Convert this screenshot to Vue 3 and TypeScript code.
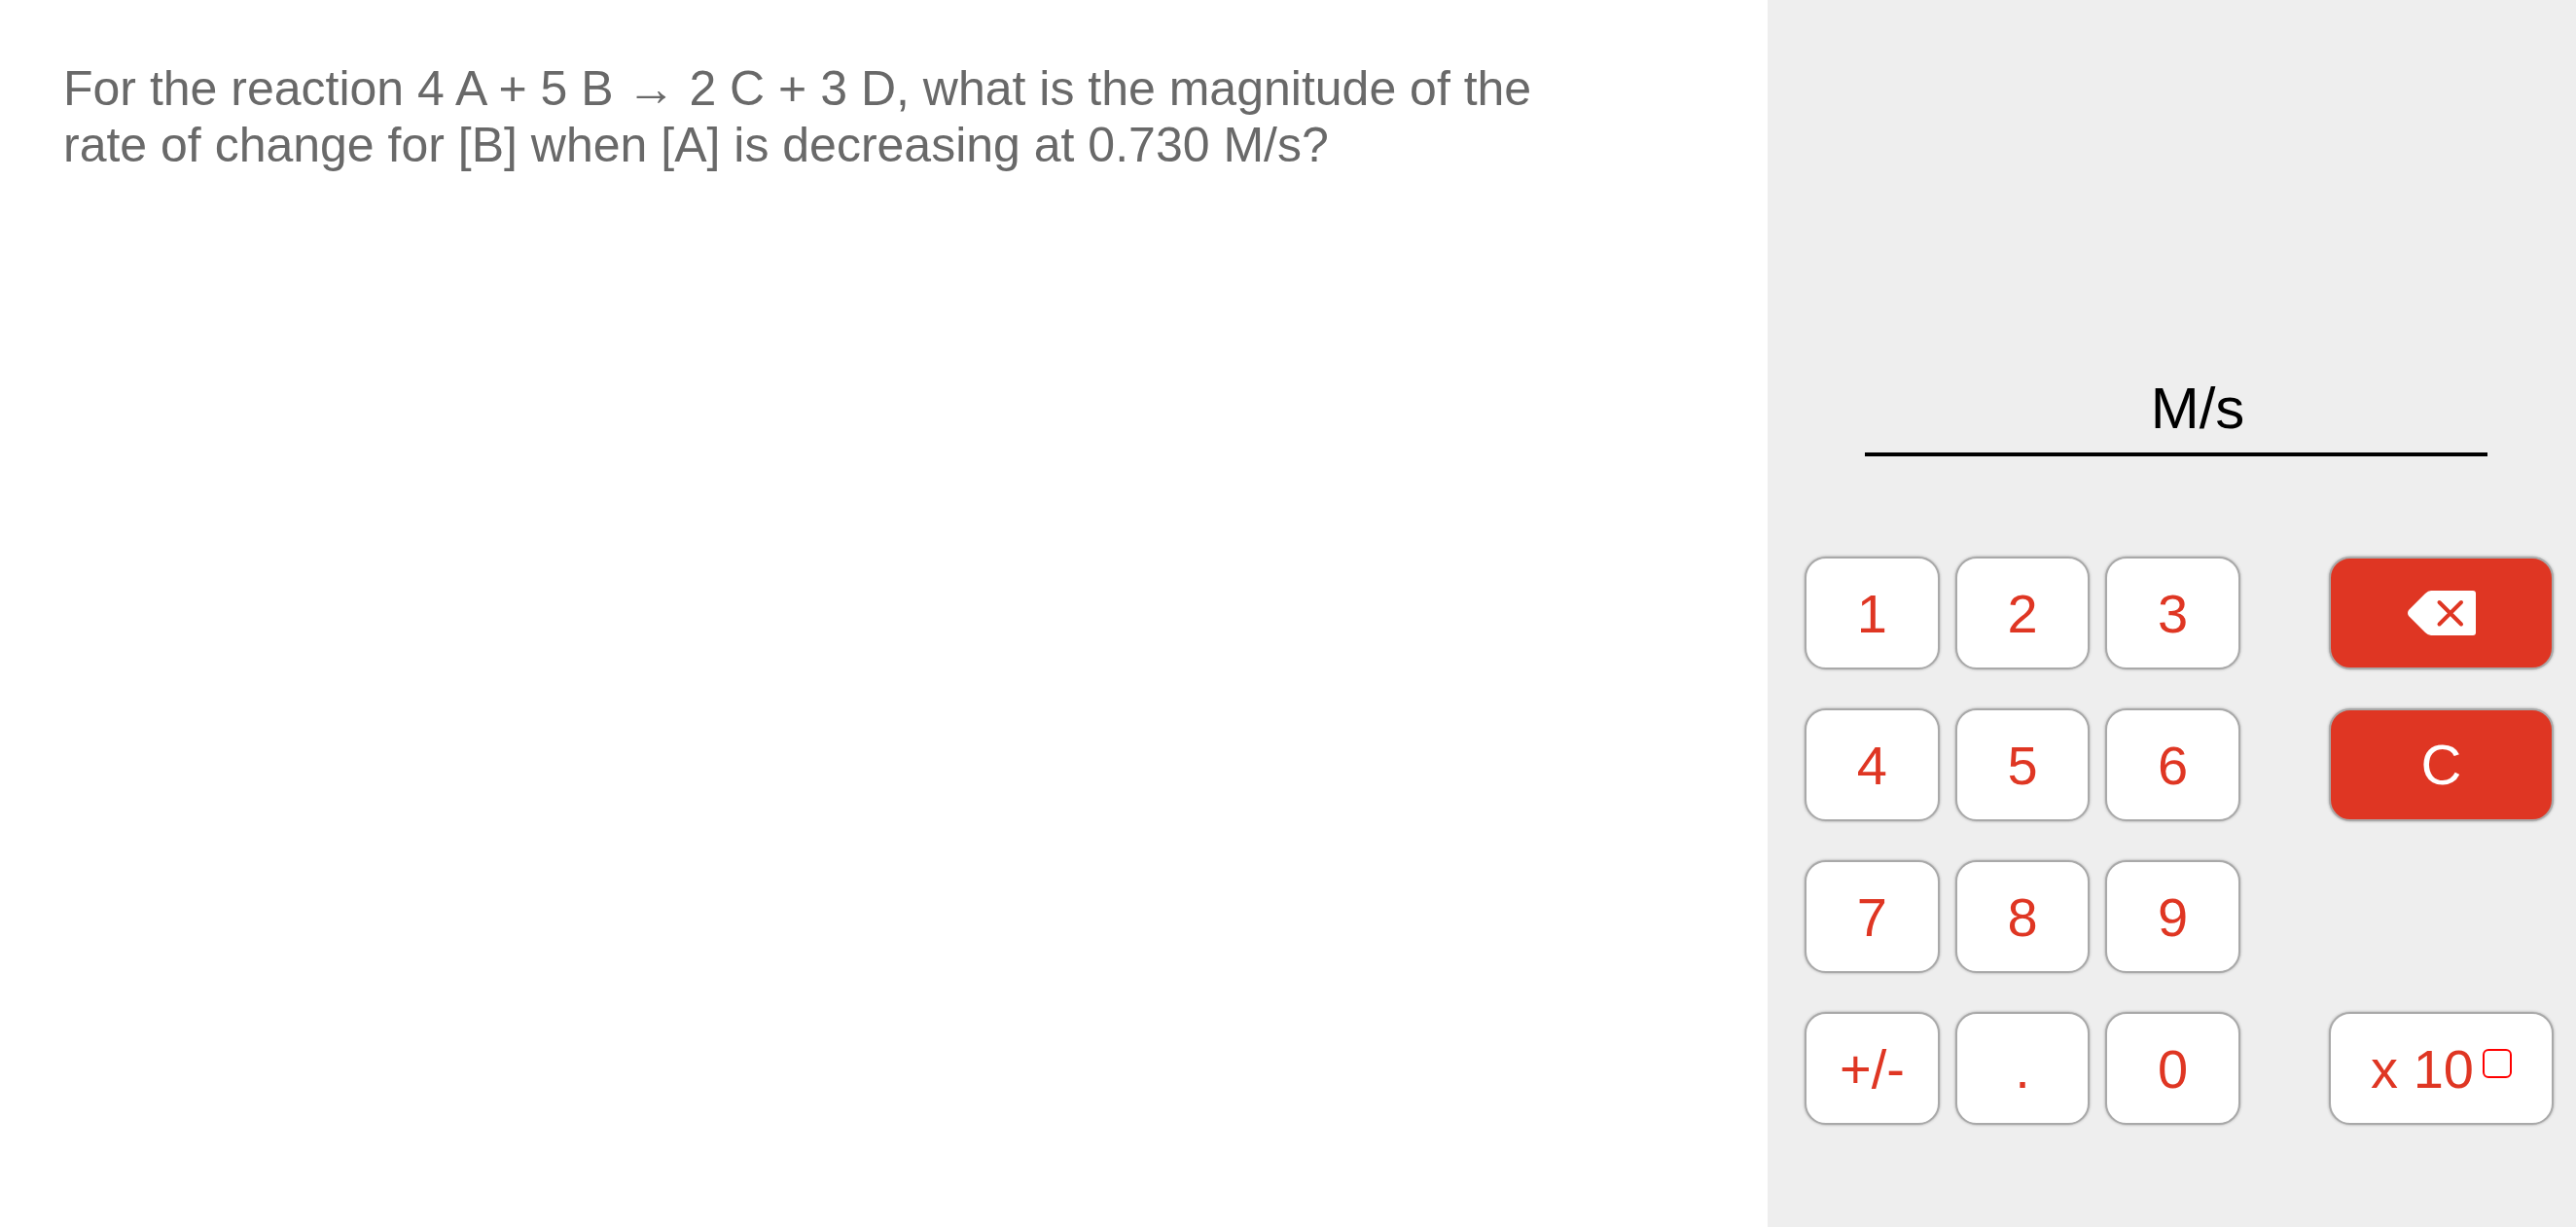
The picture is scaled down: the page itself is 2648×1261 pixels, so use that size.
<script setup lang="ts">
import { ref } from 'vue'

const unit = 'M/s'
const value = ref('')
const keys: string[] = ['1', '2', '3', '4', '5', '6', '7', '8', '9', '+/-', '.', '0']

function press(key: string): void {
  if (key === '+/-') {
    value.value = value.value.startsWith('-') ? value.value.slice(1) : '-' + value.value
  } else {
    value.value += key
  }
}

function erase(): void {
  value.value = value.value.slice(0, -1)
}

function clear(): void {
  value.value = ''
}

function exponent(): void {
  if (value.value && !value.value.includes('e')) value.value += 'e'
}
</script>

<template>
  <div class="page">
    <main class="question">
      <p>
        For the reaction 4 A + 5 B → 2 C + 3 D, what is the magnitude of the rate of change for [B]
        when [A] is decreasing at 0.730 M/s?
      </p>
    </main>

    <aside class="panel">
      <div class="answer">
        <input
          v-model="value"
          class="value"
          type="text"
          inputmode="decimal"
          aria-label="Answer in M/s"
          :style="{ width: `calc(44px + ${value.length}ch)` }"
        />
        <span class="unit">{{ unit }}</span>
      </div>

      <div class="keypad">
        <div class="digits">
          <button v-for="key in keys" :key="key" class="key" type="button" @click="press(key)">
            {{ key }}
          </button>
        </div>
        <div class="actions">
          <button class="key action" type="button" aria-label="Backspace" @click="erase">
            <svg class="icon" viewBox="0 0 70 46" aria-hidden="true">
              <path
                class="body"
                d="M24 0H67Q70 0 70 3V43Q70 46 67 46H24Q21 46 18 43L1 26Q-1 23 1 20L18 3Q21 0 24 0Z"
              />
              <path class="cross" d="M32.500 12 55 34.500M55 12 32.500 34.500" />
            </svg>
          </button>
          <button class="key action clear" type="button" @click="clear">C</button>
          <button class="key exponent" type="button" @click="exponent">
            <span>x 10</span>
            <span class="box"></span>
          </button>
        </div>
      </div>
    </aside>
  </div>
</template>

<style>
body {
  margin: 0;
}
</style>

<style scoped>
.page {
  display: flex;
  min-height: 100vh;
  font-family: 'Liberation Sans', Arial, sans-serif;
  background: #fff;
}

.question {
  flex: 1;
  padding: 62px 160px 62px 65px;
  color: #696969;
  font-size: 50px;
  line-height: 58px;
}

.question p {
  margin: 0;
}

.panel {
  box-sizing: border-box;
  width: 31.38%;
  padding: 380px 23px 40px 38px;
  background: #eee;
}

.answer {
  display: flex;
  align-items: flex-start;
  justify-content: center;
  height: 85px;
  margin: 0 68px 103px 62px;
  border-bottom: 4px solid #000;
  color: #000;
  font-size: 60px;
  line-height: 80px;
}

.value {
  box-sizing: border-box;
  max-width: 70%;
  height: 80px;
  padding: 0;
  border: 0;
  outline: 0;
  background: transparent;
  color: inherit;
  font: inherit;
  text-align: right;
}

.keypad {
  display: flex;
  gap: 91px;
}

.digits,
.actions {
  display: grid;
  grid-template-rows: repeat(4, 116px);
  gap: 40px 16px;
}

.digits {
  flex: 448 1 0;
  grid-template-columns: repeat(3, 1fr);
}

.actions {
  flex: 231 1 0;
}

.key {
  display: flex;
  align-items: center;
  justify-content: center;
  gap: 9px;
  min-width: 0;
  padding: 2px 0 0;
  border: 2px solid #a9a9a9;
  border-radius: 22px;
  box-shadow: 0 0 3px #a0a0a0;
  background: #fff;
  color: #df3623;
  font-family: inherit;
  font-size: 56px;
  line-height: 64px;
  cursor: pointer;
}

.action {
  padding: 0;
  background: #df3623;
  color: #fff;
}

.clear {
  font-size: 58px;
}

.exponent {
  grid-row: 4;
}

.box {
  box-sizing: border-box;
  width: 30px;
  height: 30px;
  margin-bottom: 12px;
  border: 2px solid #f00;
  border-radius: 6px;
}

.icon {
  width: 70px;
  height: 46px;
}

.body {
  fill: #fff;
}

.cross {
  fill: none;
  stroke: #df3623;
  stroke-width: 4;
  stroke-linecap: round;
}
</style>
